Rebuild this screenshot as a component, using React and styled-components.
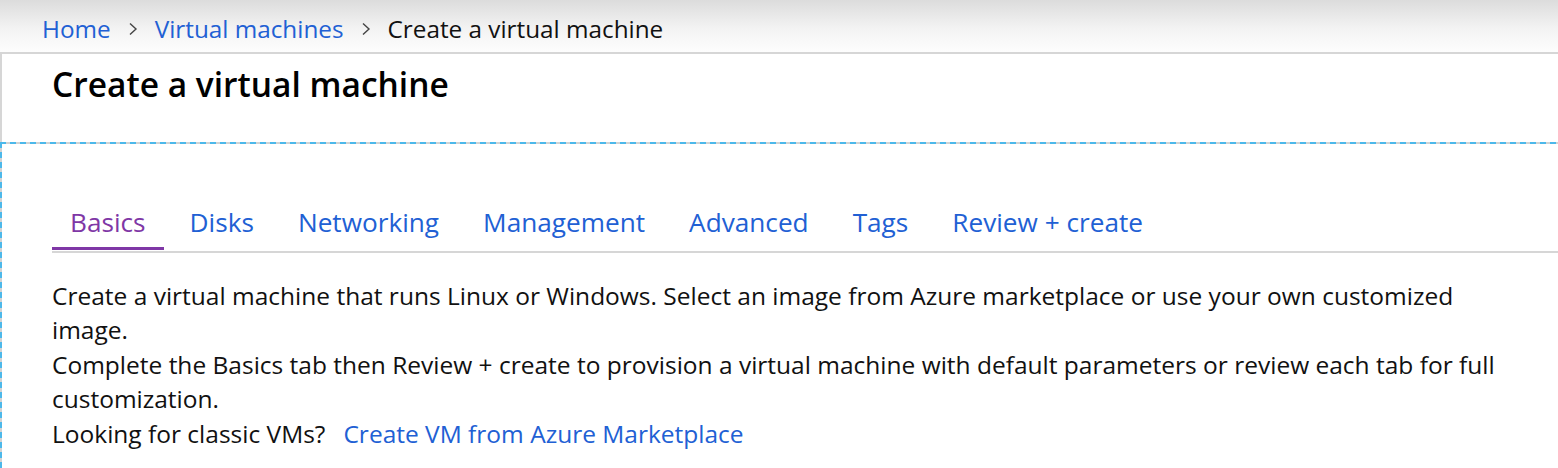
import React from "react";
import styled, { createGlobalStyle } from "styled-components";

const GlobalStyle = createGlobalStyle`
  html, body {
    margin: 0;
    padding: 0;
    background: #ffffff;
  }
  body {
    font-family: "Open Sans", "Noto Sans", sans-serif;
    color: #111111;
    overflow: hidden;
  }
  * {
    box-sizing: border-box;
  }
`

const Page = styled.div`
  width: 1558px;
  min-height: 468px;
  display: flex;
  flex-direction: column;
`

const Crumbs = styled.nav`
  height: 52px;
  display: flex;
  align-items: center;
  padding: 5px 0 0 42px;
  background: linear-gradient(180deg, #dcdcdc 0%, #f3f3f3 55%, #fdfdfd 100%);
  font-size: 24.3px;
`

const CrumbLink = styled.a`
  color: #2160d4;
  text-decoration: none;
  cursor: pointer;
`

const CrumbCurrent = styled.span`
  color: #111111;
`

const Chevron = styled.svg`
  width: 10px;
  height: 14px;
  margin: 0 17px;
  flex: none;
`

const Header = styled.header`
  height: 90px;
  border-top: 2px solid #d6d6d6;
  border-left: 2px solid #d6d6d6;
  padding: 8px 0 0 50px;
`

const Title = styled.h1`
  margin: 0;
  font-size: 33.5px;
  line-height: 44px;
  font-weight: 600;
  color: #000000;
`

const Frame = styled.section`
  flex: 1;
  padding: 63px 0 20px 52px;
  background:
    repeating-linear-gradient(90deg, #4cb8ea 0 6px, #d2d2d2 6px 10px) left top / 100% 2px no-repeat,
    repeating-linear-gradient(180deg, #4cb8ea 0 6px, #d2d2d2 6px 10px) left top / 2px 100% no-repeat;
`

const TabBar = styled.div`
  display: flex;
  gap: 8px;
  border-bottom: 2px solid #d6d6d6;
`

const Tab = styled.a`
  padding: 0 18px 7px;
  font-size: 26.2px;
  line-height: 35px;
  cursor: pointer;
  color: ${(props) => (props.$active ? "#7f37a6" : "#2160d4")};
  border-bottom: 3px solid ${(props) => (props.$active ? "#7f37a6" : "transparent")};
  margin-bottom: 1px;
`

const Intro = styled.div`
  margin-top: 26px;
  font-size: 24.5px;
  line-height: 34.4px;
  color: #111111;
  white-space: nowrap;
`

const Line = styled.p`
  margin: 0;
`

const InlineLink = styled.a`
  color: #2160d4;
  text-decoration: none;
  margin-left: 18px;
  cursor: pointer;
`

function ChevronIcon() {
  return (
    <Chevron viewBox="0 0 10 14">
      <path d="M2 1.5 L8 7 L2 12.5" fill="none" stroke="#444" strokeWidth="1.4" />
    </Chevron>
  );
}

const tabs = ["Basics", "Disks", "Networking", "Management", "Advanced", "Tags", "Review + create"];

export default function App() {
  return (
    <Page>
      <GlobalStyle />
      <Crumbs>
        <CrumbLink>Home</CrumbLink>
        <ChevronIcon />
        <CrumbLink>Virtual machines</CrumbLink>
        <ChevronIcon />
        <CrumbCurrent>Create a virtual machine</CrumbCurrent>
      </Crumbs>
      <Header>
        <Title>Create a virtual machine</Title>
      </Header>
      <Frame>
        <TabBar>
          {tabs.map((t, i) => (
            <Tab key={t} $active={i === 0}>{t}</Tab>
          ))}
        </TabBar>
        <Intro>
          <Line>
            Create a virtual machine that runs Linux or Windows. Select an image from Azure marketplace or use your own customized
            <br />
            image.
          </Line>
          <Line>
            Complete the Basics tab then Review + create to provision a virtual machine with default parameters or review each tab for full
            <br />
            customization.
          </Line>
          <Line>
            Looking for classic VMs?<InlineLink>Create VM from Azure Marketplace</InlineLink>
          </Line>
        </Intro>
      </Frame>
    </Page>
  );
}
